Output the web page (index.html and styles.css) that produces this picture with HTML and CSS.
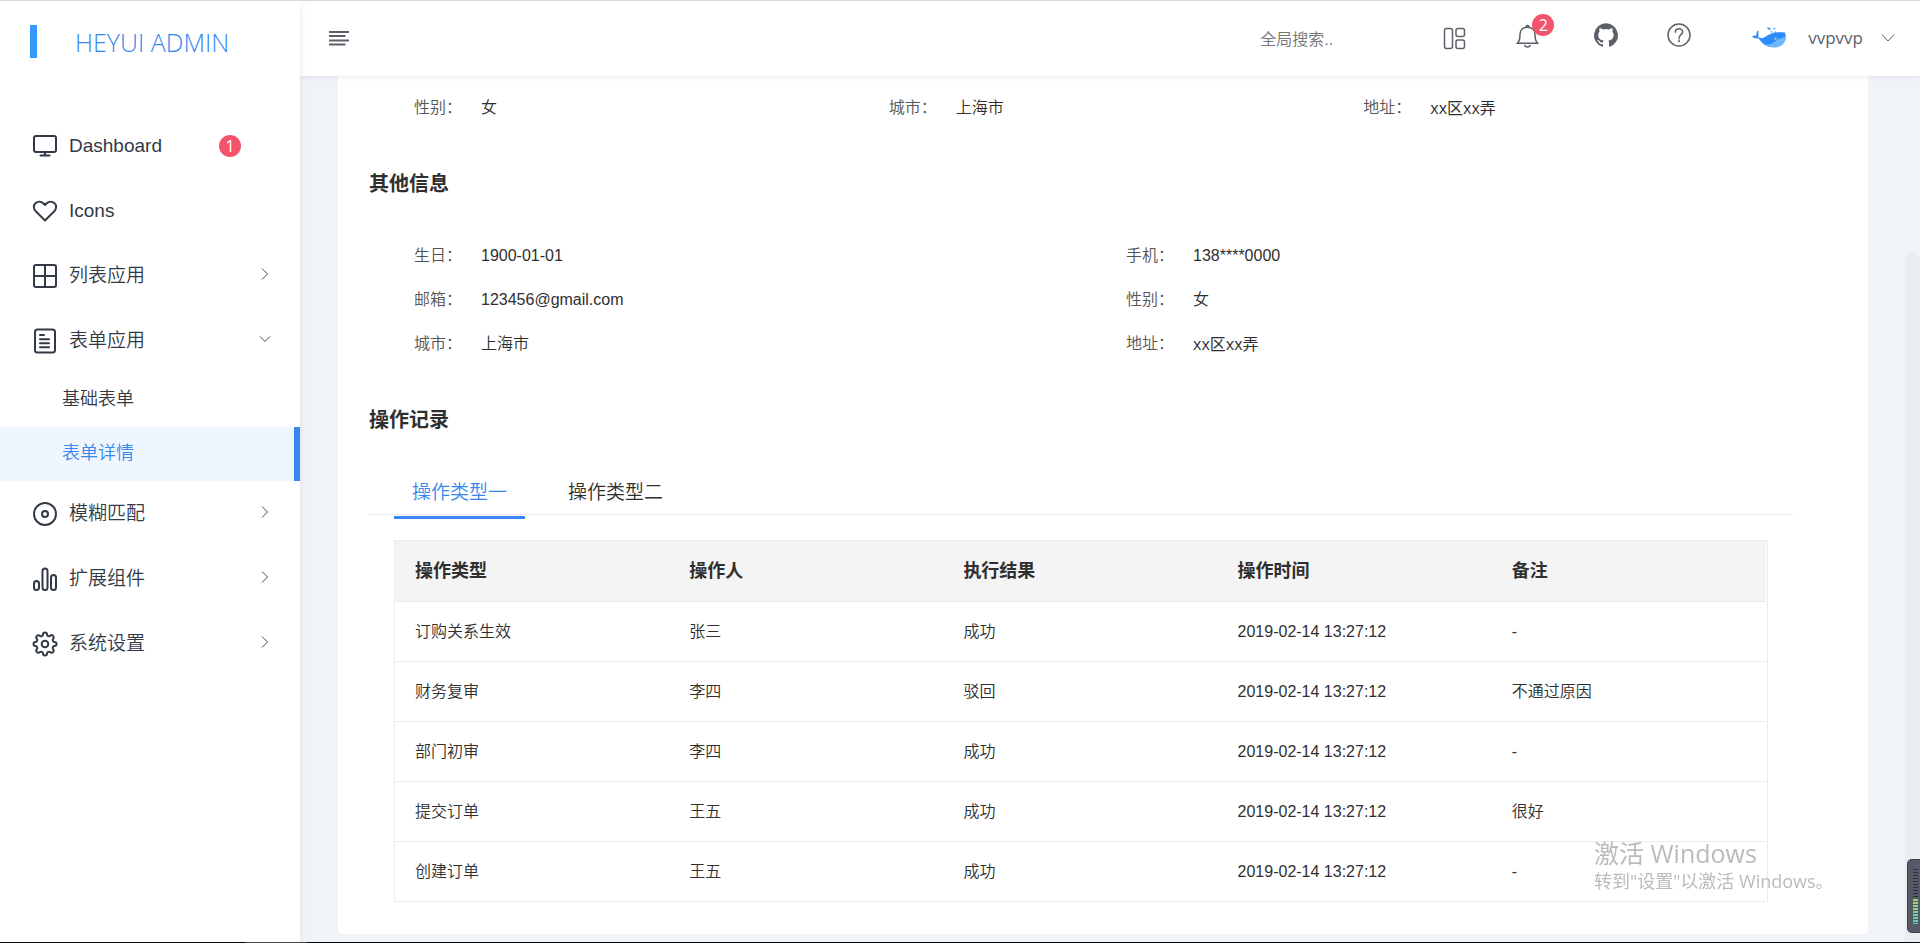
FILE: index.html
```html
<!DOCTYPE html>
<html lang="zh-CN">
<head>
<meta charset="utf-8">
<title>HEYUI ADMIN</title>
<link rel="stylesheet" href="styles.css">
</head>
<body>
<div class="app">
  <aside class="sidebar">
    <div class="logo"><span class="logo-bar"></span><a class="logo-text" href="#">HEYUI ADMIN</a></div>
    <nav class="menu">
      <a class="menu-item" href="#">
        <svg class="icon" viewBox="0 0 24 24"><rect x="1" y="2" width="22" height="16" rx="2"/><path d="M12 18v3M7.500 21.500h9"/></svg>
        <span class="menu-label">Dashboard</span><span class="badge menu-badge">1</span>
      </a>
      <a class="menu-item" href="#">
        <svg class="icon" viewBox="0 0 24 24"><path d="M12 21.500 2.500 12C.3 9.600.3 6.200 2.500 4.200 4.900 2 8.200 2.200 10.300 4.300L12 6l1.700-1.700c2.100-2.100 5.400-2.300 7.800-.1 2.200 2 2.200 5.400 0 7.800z"/></svg>
        <span class="menu-label">Icons</span>
      </a>
      <a class="menu-item" href="#">
        <svg class="icon" viewBox="0 0 24 24"><rect x="1" y="1" width="22" height="22" rx="2"/><path d="M12 1v22M1 12h22"/></svg>
        <span class="menu-label">列表应用</span><svg class="arrow" viewBox="0 0 12 12"><path d="M3 .5 8.500 6 3 11.500"/></svg>
      </a>
      <a class="menu-item" href="#">
        <svg class="icon" viewBox="0 0 24 24"><rect x="2" y="0.500" width="20" height="23" rx="2.500"/><path d="M7 6h4M7 10.300h9M7 14.300h9M7 18.300h9"/></svg>
        <span class="menu-label">表单应用</span><svg class="arrow" viewBox="0 0 12 12"><path d="M1 3.500 6 8.500l5-5"/></svg>
      </a>
      <a class="sub-item" href="#">基础表单</a>
      <a class="sub-item active" href="#">表单详情</a>
      <a class="menu-item" href="#">
        <svg class="icon" viewBox="0 0 24 24"><circle cx="12" cy="12" r="11"/><circle cx="12" cy="12" r="3"/></svg>
        <span class="menu-label">模糊匹配</span><svg class="arrow" viewBox="0 0 12 12"><path d="M3 .5 8.500 6 3 11.500"/></svg>
      </a>
      <a class="menu-item" href="#">
        <svg class="icon" viewBox="0 0 24 24"><rect x="1" y="14" width="5" height="9" rx="2.500"/><rect x="9.500" y="1.500" width="5" height="21.500" rx="2.500"/><rect x="18" y="8" width="5" height="15" rx="2.500"/></svg>
        <span class="menu-label">扩展组件</span><svg class="arrow" viewBox="0 0 12 12"><path d="M3 .5 8.500 6 3 11.500"/></svg>
      </a>
      <a class="menu-item" href="#">
        <svg class="icon" viewBox="0 0 24 24"><circle cx="12" cy="12" r="3.300"/><path d="M10 2.500a2 2 0 0 1 4 0c.2 1.500 1.800 2.200 3.100 1.400a2 2 0 0 1 3 3c-.9 1.300-.2 2.900 1.400 3.100a2 2 0 0 1 0 4c-1.600.2-2.300 1.800-1.400 3.100a2 2 0 0 1-3 3c-1.300-.9-2.900-.2-3.100 1.400a2 2 0 0 1-4 0c-.2-1.600-1.800-2.300-3.100-1.400a2 2 0 0 1-3-3c.9-1.300.2-2.900-1.400-3.100a2 2 0 0 1 0-4c1.600-.2 2.300-1.800 1.400-3.100a2 2 0 0 1 3-3C8.200 4.700 9.800 4 10 2.500z"/></svg>
        <span class="menu-label">系统设置</span><svg class="arrow" viewBox="0 0 12 12"><path d="M3 .5 8.500 6 3 11.500"/></svg>
      </a>
    </nav>
  </aside>

  <div class="page">
    <header class="header">
      <button class="toggle" type="button" aria-label="菜单"><svg viewBox="0 0 20 16"><path d="M0 1h20M0 5h16.500M0 9.400h20M0 13.500h16.500"/></svg></button>
      <input class="search" type="text" placeholder="全局搜索.." aria-label="全局搜索">
      <button class="action" type="button" aria-label="布局"><svg class="icon thin" viewBox="0 0 24 24"><rect x="1.500" y="1.500" width="8" height="20" rx="2"/><rect x="13" y="1.500" width="8.500" height="8" rx="2"/><rect x="13" y="13" width="8.500" height="8.500" rx="2"/></svg></button>
      <div class="actions">
        <button class="action bell" type="button" aria-label="消息"><svg class="icon thin" viewBox="0 0 24 24"><path d="M1 20.300h21c-2.500-1.600-3-3.500-3-8.800C19 7 15.800 4.200 11.500 4.200S4 7 4 11.500c0 5.300-.5 7.200-3 8.800zM10 4c0-2 3-2 3 0M8.800 22.500c.8 2 4.600 2 5.400 0"/></svg><span class="badge bell-badge">2</span></button>
        <a class="action" href="#" aria-label="GitHub"><svg class="icon solid" viewBox="0 0 24 24"><path d="M12 .3a12 12 0 0 0-3.800 23.400c.6.1.8-.3.8-.6v-2c-3.300.7-4-1.600-4-1.600-.6-1.400-1.400-1.800-1.400-1.800-1-.7.1-.7.1-.7 1.200 0 1.900 1.200 1.900 1.200 1 1.800 2.800 1.300 3.500 1 0-.8.4-1.300.7-1.600-2.700-.3-5.500-1.300-5.500-6 0-1.200.5-2.300 1.300-3.100-.2-.4-.6-1.600 0-3.200 0 0 1-.3 3.400 1.200a11.500 11.500 0 0 1 6 0c2.300-1.500 3.300-1.200 3.300-1.200.6 1.600.2 2.800 0 3.200.9.800 1.300 1.900 1.300 3.200 0 4.600-2.800 5.600-5.500 5.900.5.400.9 1 .9 2.200v3.300c0 .3.1.7.8.6A12 12 0 0 0 12 .3"/></svg></a>
        <a class="action" href="#" aria-label="帮助"><svg class="icon thin" viewBox="0 0 24 24"><circle cx="12" cy="12" r="11"/><path d="M8.400 9.200C8.400 4.500 15.600 4.700 15.600 8.900c0 2.900-3.600 3-3.600 6.400M12 17v1.800"/></svg></a>
      </div>
      <button class="user" type="button">
        <svg class="whale" viewBox="0 0 36 22"><path fill="#2d8cff" d="M1 9.500C3 8 4.500 9 5.500 8c0-2 .2-4 1.800-4.700.2 2.500.5 4.500-.3 6.700 2 1 4.500 1.500 7.500-.3C19 6.500 24 4.500 34 5.500c1.500 4 .6 9-2.800 12.300C26 21 17 20.500 12.500 17 10 15 9 12 6.500 11.200 4.500 11.500 2 11 1 9.500z"/><path fill="#6bb8ff" d="M34.800 9c.2 6-4 11.500-11.800 11.500-4 0-7.500-1-10-3.300 5.500 1 8.500-.5 12-3.500 3-2.500 6-2.200 9.800-4.700z"/><circle cx="24.500" cy="11.500" r="1.500" fill="#8db4d9"/><path fill="#3b9cff" d="M16 .8c1.500-.5 3.500-.2 4 1.700-1.500.8-3.300.2-4-1.700zM21.800 2.600 23.800.6l.8 1.600zM19.500 4.500l1.800-.3.2 1.400h-1.800zM22.800 5l2.200-.5v1h-2z"/></svg>
        <span>vvpvvp</span>
        <svg class="user-arrow" viewBox="0 0 14 8"><path d="M1 .5 7 7l6-6.500"/></svg>
      </button>
    </header>

    <div class="viewport">
      <main class="card">
        <div class="content">
          <dl class="fields three">
            <div class="field"><dt>性别：</dt><dd>女</dd></div>
            <div class="field"><dt>城市：</dt><dd>上海市</dd></div>
            <div class="field"><dt>地址：</dt><dd class="wide-latin">xx区xx弄</dd></div>
          </dl>
          <h2 class="title">其他信息</h2>
          <dl class="fields two">
            <div class="field"><dt>生日：</dt><dd>1900-01-01</dd></div>
            <div class="field"><dt>手机：</dt><dd>138****0000</dd></div>
            <div class="field"><dt>邮箱：</dt><dd>123456@gmail.com</dd></div>
            <div class="field"><dt>性别：</dt><dd>女</dd></div>
            <div class="field"><dt>城市：</dt><dd>上海市</dd></div>
            <div class="field"><dt>地址：</dt><dd class="wide-latin">xx区xx弄</dd></div>
          </dl>
          <h2 class="title">操作记录</h2>
          <div class="tabs" role="tablist">
            <button class="tab selected" type="button" role="tab" aria-selected="true">操作类型一</button>
            <button class="tab" type="button" role="tab" aria-selected="false">操作类型二</button>
          </div>
          <div class="table-box">
            <table class="table">
              <thead><tr><th>操作类型</th><th>操作人</th><th>执行结果</th><th>操作时间</th><th>备注</th></tr></thead>
              <tbody>
                <tr><td>订购关系生效</td><td>张三</td><td>成功</td><td>2019-02-14 13:27:12</td><td>-</td></tr>
                <tr><td>财务复审</td><td>李四</td><td>驳回</td><td>2019-02-14 13:27:12</td><td>不通过原因</td></tr>
                <tr><td>部门初审</td><td>李四</td><td>成功</td><td>2019-02-14 13:27:12</td><td>-</td></tr>
                <tr><td>提交订单</td><td>王五</td><td>成功</td><td>2019-02-14 13:27:12</td><td>很好</td></tr>
                <tr><td>创建订单</td><td>王五</td><td>成功</td><td>2019-02-14 13:27:12</td><td>-</td></tr>
              </tbody>
            </table>
          </div>
        </div>
      </main>
      <div class="scroll-track"><div class="scroll-thumb"></div></div>
    </div>
  </div>
</div>
<div class="taskbar"><span class="taskbar-active"></span></div>
<div class="watermark"><p class="watermark-title">激活 Windows</p><p class="watermark-text">转到"设置"以激活 Windows。</p></div>
<div class="meter"><span class="meter-idle"></span><span class="meter-level"></span></div>
</body>
</html>
```
FILE: styles.css
```css
* { box-sizing: border-box; }
body {
  margin: 0;
  height: 100vh;
  display: flex;
  flex-direction: column;
  border-top: 1px solid #d8d8de;
  overflow: hidden;
  font: 350 16px/24px "Liberation Sans", "Noto Sans CJK SC", sans-serif;
  color: #2f2f2f;
  background: #fff;
}
a { color: inherit; text-decoration: none; }
button { font: inherit; color: inherit; background: none; border: 0; padding: 0; cursor: pointer; }
h2, p, dl, dd { margin: 0; }

.app { flex: 1; min-height: 0; display: flex; }

.sidebar {
  flex: 0 0 300px;
  background: #fff;
  box-shadow: 0 0 8px rgba(0, 21, 41, .08);
  z-index: 2;
  color: #313a46;
}
.logo { height: 81px; display: flex; align-items: center; padding-left: 30px; gap: 38px; }
.logo-bar { width: 7px; height: 33px; background: #39f; }
.logo-text { font: 300 25px/36px "Open Sans", "Noto Sans", sans-serif; color: #3788ee; }
.menu { padding-top: 31px; }
.menu-item { display: flex; align-items: center; height: 65px; padding: 0 29px 0 33px; font-size: 19px; }
.menu-label { margin-left: 12px; flex: 1; }
.icon { width: 24px; height: 24px; fill: none; stroke: currentColor; stroke-width: 2; stroke-linecap: round; stroke-linejoin: round; flex: none; overflow: visible; }
.thin { stroke-width: 1.5; }
.solid { fill: currentColor; stroke: none; }
.arrow { width: 12px; height: 12px; margin-bottom: 3px; fill: none; stroke: #445; stroke-width: 1; }
.badge { width: 22px; height: 22px; border-radius: 50%; background: #f3546b; color: #fff; font: 16px/22px "Open Sans", sans-serif; text-align: center; }
.menu-badge { margin-right: 30px; }
.sub-item { display: flex; align-items: center; height: 54px; padding: 0 0 2px 62px; font-size: 18px; border-right: 6px solid transparent; }
.sub-item.active { color: #3788ee; background: #eff6ff; border-right-color: #3788ee; }

.page { flex: 1; min-width: 0; display: flex; flex-direction: column; }
.header {
  flex: 0 0 75px;
  display: flex;
  align-items: center;
  padding: 0 25px 0 29px;
  background: #fff;
  box-shadow: 0 1px 6px rgba(0, 21, 41, .08);
  color: #5c6068;
  z-index: 1;
}
.toggle { width: 20px; height: 16px; margin-right: auto; }
.toggle svg { display: block; width: 20px; height: 16px; stroke: currentColor; stroke-width: 2; }
.search { width: 158px; height: 36px; border: 0; padding: 2px 0 0; background: none; font: inherit; outline: 0; }
.search::placeholder { color: #757575; opacity: 1; }
.actions { display: flex; padding-bottom: 7px; }
.action { position: relative; display: flex; justify-content: center; width: 73px; }
.bell { margin-right: 5px; }
.bell-badge { position: absolute; left: 41px; top: -9px; }
.user { display: flex; align-items: center; margin-left: 36px; padding-bottom: 2px; font: 17px/24px "Open Sans", sans-serif; }
.whale { width: 36px; height: 22px; margin-right: 21px; }
.user-arrow { width: 14px; height: 8px; margin-left: 18px; fill: none; stroke: currentColor; }

.viewport { flex: 1; min-height: 0; display: flex; background: #f0f4f8; }
.card { flex: 1; min-width: 0; margin: 0 37px 8px 38px; padding: 0 75px 33px 31px; background: #fff; border-radius: 0 0 4px 4px; }
.content { padding-top: 10px; }
.fields { display: grid; line-height: 44px; }
.three { grid-template-columns: repeat(3, 1fr); }
.two { grid-template-columns: repeat(2, 1fr); }
.field { display: flex; padding-left: 45px; }
.field dt { width: 67px; color: #555; }
.wide-latin { font-family: "Open Sans", "Noto Sans CJK SC", sans-serif; font-weight: 400; }
.title { font-size: 20px; line-height: 32px; padding: 38px 0 34px; }
.tabs { display: flex; gap: 25px; padding-left: 25px; border-bottom: 1px solid #ebebeb; margin: 2px 0 25px; }
.tab { height: 47px; padding: 0 18px 3px; margin-bottom: -5px; font-size: 19px; border-bottom: 3px solid transparent; }
.tab.selected { color: #3788ee; border-bottom-color: #3788ee; }
.table-box { margin: 0 25px; border: 1px solid #ebebeb; border-bottom: 0; padding-right: 1px; }
.table { width: 100%; table-layout: fixed; border-collapse: separate; border-spacing: 0; }
.table th, .table td { height: 60px; padding: 0 20px; text-align: left; border-bottom: 1px solid #ebebeb; }
.table th { height: 61px; font-size: 18px; background: #f4f4f4; }

.scroll-track { flex: 0 0 15px; padding-top: 177px; display: flex; }
.scroll-thumb { flex: 1; background: #ebeeef; border-radius: 8px 8px 0 0; }

.taskbar { flex: 0 0 1px; background: #05080c; padding-left: 246px; }
.taskbar-active { display: block; width: 61px; height: 1px; background: #4a4a4e; }

.watermark { position: fixed; right: 93px; bottom: 50px; width: 233px; z-index: 3; color: #bbb; font-family: "Open Sans", "Noto Sans CJK SC", sans-serif; font-weight: 400; white-space: nowrap; pointer-events: none; }
.watermark-title { font-size: 25px; line-height: 32px; }
.watermark-text { font-size: 18px; line-height: 24px; }

.meter { position: fixed; right: 0; bottom: 10px; width: 13px; height: 74px; padding: 9px 2px 8px 5px; background: #555a69; border: solid #41424c; border-width: 1px 0 1px 1px; border-radius: 5px 0 0 5px; z-index: 3; display: flex; flex-direction: column; }
.meter-idle { flex: 1; background: repeating-linear-gradient(#2c2e36 0 1px, #555a69 1px 3px); }
.meter-level { height: 25px; background: repeating-linear-gradient(transparent 0 2px, #555a69 2px 3px), linear-gradient(#b4cc6c, #8ad68a 40%, #55d0b4); }
```
